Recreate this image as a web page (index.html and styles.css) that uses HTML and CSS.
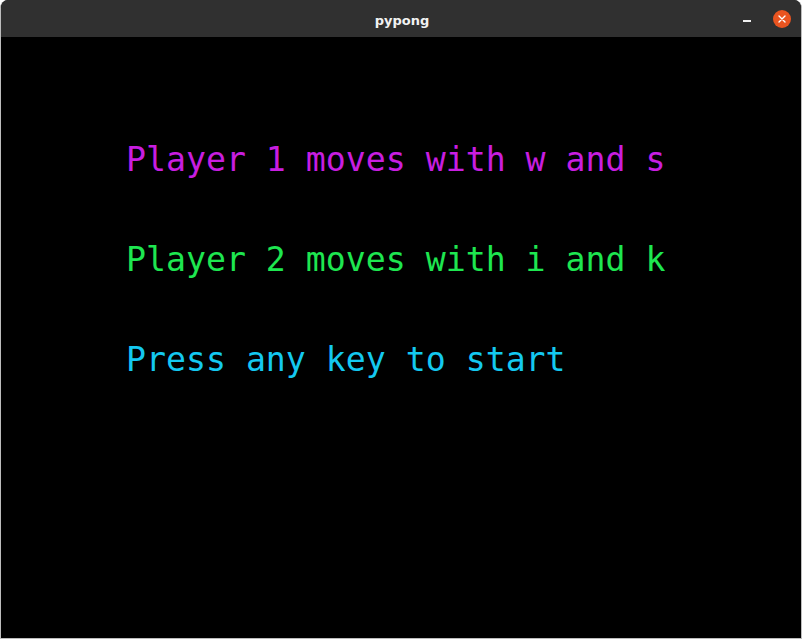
FILE: index.html
```html
<!DOCTYPE html>
<html>
<head>
<meta charset="utf-8">
<link rel="stylesheet" href="styles.css">
</head>
<body>
<div class="window">
  <div class="titlebar">
    <span class="title">pypong</span>
    <div class="controls">
      <span class="minimize"></span>
      <span class="close">
        <svg width="18" height="18" viewBox="0 0 18 18"><circle cx="9" cy="9" r="9" fill="#e95420"/><path d="M6 6 L12 12 M12 6 L6 12" stroke="#fff" stroke-width="1.4" stroke-linecap="round"/></svg>
      </span>
    </div>
  </div>
  <div class="screen">
    <p class="line p1">Player 1 moves with w and s</p>
    <p class="line p2">Player 2 moves with i and k</p>
    <p class="line p3">Press any key to start</p>
  </div>
</div>
</body>
</html>
```
FILE: styles.css
```css
html, body {
  margin: 0;
  padding: 0;
  background: #ffffff;
}
.window {
  width: 802px;
  height: 639px;
  box-sizing: border-box;
  border: 1px solid #bdbdbd;
  border-top: none;
  border-radius: 8px 8px 0 0;
  overflow: hidden;
  display: flex;
  flex-direction: column;
  background: #000;
}
.titlebar {
  height: 37px;
  flex: none;
  background: #303030;
  position: relative;
  display: flex;
  align-items: center;
  justify-content: center;
}
.title {
  font-family: "DejaVu Sans", sans-serif;
  font-weight: bold;
  font-size: 13px;
  color: #f2f2f2;
  margin-left: 2px;
  margin-top: 3px;
}
.controls {
  position: absolute;
  right: 10px;
  top: 10px;
  display: flex;
  align-items: center;
  gap: 22px;
}
.minimize {
  width: 8px;
  height: 2px;
  background: #f0f0f0;
  margin-top: 3px;
}
.close {
  width: 18px;
  height: 18px;
  display: block;
}
.close svg { display: block; }
.screen {
  flex: 1;
  background: #000;
  padding: 73px 0 0 125px;
}
.line {
  margin: 0;
  font-family: "DejaVu Sans Mono", monospace;
  font-size: 33.2px;
  line-height: 100px;
  white-space: pre;
}
.p1 { color: #c81ee0; }
.p2 { color: #1ee650; }
.p3 { color: #14c8f0; }
```
